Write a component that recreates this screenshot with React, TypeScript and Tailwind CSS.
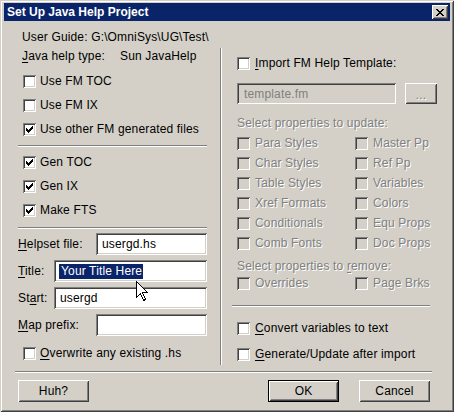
import React from "react";

const sunken =
  "shadow-[inset_1px_1px_#808080,inset_-1px_-1px_#ffffff,inset_2px_2px_#404040,inset_-2px_-2px_#d4d0c8]";
const raised =
  "shadow-[inset_1px_1px_#ffffff,inset_-1px_-1px_#404040,inset_2px_2px_#d4d0c8,inset_-2px_-2px_#808080]";
const dis = "text-[#808080] [text-shadow:1px_1px_0_#ffffff]";

function CheckMark() {
  return (
    <svg width="7" height="7" viewBox="0 0 7 7" shapeRendering="crispEdges" className="block">
      <path
        fill="#000"
        d="M0 2h1v3H0zM1 3h1v3H1zM2 4h1v3H2zM3 3h1v3H3zM4 2h1v3H4zM5 1h1v3H5zM6 0h1v3H6z"
      />
    </svg>
  );
}

function Box({ checked, disabled }: { checked?: boolean; disabled?: boolean }) {
  return (
    <span
      className={`w-[13px] h-[13px] shrink-0 flex items-center justify-center ${
        disabled ? "bg-[#d4d0c8]" : "bg-white"
      } ${sunken}`}
    >
      {checked && <CheckMark />}
    </span>
  );
}

function CheckRow({
  label,
  checked,
  disabled,
  h = "h-[24px]",
  gap = "gap-[4px]",
  w = "",
}: {
  label: React.ReactNode;
  checked?: boolean;
  disabled?: boolean;
  h?: string;
  gap?: string;
  w?: string;
}) {
  return (
    <div className={`flex items-center ${h} ${gap} ${w}`}>
      <Box checked={checked} disabled={disabled} />
      <span className={`whitespace-nowrap ${disabled ? dis : "text-black"}`}>{label}</span>
    </div>
  );
}

function U({ children }: { children: React.ReactNode }) {
  return <span className="underline underline-offset-[2px] decoration-1">{children}</span>;
}

function HSep({ className = "" }: { className?: string }) {
  return <div className={`h-[2px] border-t border-t-[#808080] border-b border-b-white ${className}`} />;
}

function Field({ w, children }: { w: string; children?: React.ReactNode }) {
  return (
    <div className={`${w} h-[22px] bg-white ${sunken} flex items-center pl-[6px] text-black whitespace-nowrap`}>
      {children}
    </div>
  );
}

function Button({ children, def, w = "w-[71px]" }: { children: React.ReactNode; def?: boolean; w?: string }) {
  if (def) {
    return (
      <div className={`${w} h-[22px] border border-black flex`}>
        <div className={`flex-1 flex items-center justify-center ${raised} text-black`}>{children}</div>
      </div>
    );
  }
  return <div className={`${w} h-[22px] flex items-center justify-center ${raised} text-black`}>{children}</div>;
}

function CloseGlyph() {
  return (
    <svg width="8" height="7" viewBox="0 0 8 7" shapeRendering="crispEdges" className="block">
      <path
        fill="#000"
        d="M0 0h2v1H0zM6 0h2v1H6zM1 1h2v1H1zM5 1h2v1H5zM2 2h4v1H2zM3 3h2v1H3zM2 4h4v1H2zM1 5h2v1H1zM5 5h2v1H5zM0 6h2v1H0zM6 6h2v1H6z"
      />
    </svg>
  );
}

function Cursor() {
  return (
    <svg width="13" height="21" viewBox="0 0 13 21" shapeRendering="crispEdges" className="block">
      <path
        d="M0.5 0.5 L0.5 16.5 L4.5 12.5 L7.5 19.5 L9.5 18.5 L6.5 11.5 L11.5 11.5 Z"
        fill="#fff"
        stroke="#000"
        strokeWidth="1"
      />
    </svg>
  );
}

export default function App() {
  return (
    <div
      className={`relative w-[454px] h-[412px] bg-[#d4d0c8] pt-[3px] px-[4px] flex flex-col font-['Liberation_Sans',Arial,sans-serif] text-[12px] leading-[14px] tracking-[0.15px] shadow-[inset_1px_1px_#d4d0c8,inset_-1px_-1px_#404040,inset_2px_2px_#ffffff,inset_-2px_-2px_#808080]`}
    >
      {/* title bar */}
      <div className="h-[18px] shrink-0 bg-[#0a246a] flex items-center justify-between pl-[3px] pr-[2px]">
        <span className="text-white font-bold text-[12px] tracking-normal whitespace-nowrap">Set Up Java Help Project</span>
        <div className={`w-[16px] h-[14px] bg-[#d4d0c8] ${raised} flex items-center justify-center`}>
          <CloseGlyph />
        </div>
      </div>

      {/* user guide */}
      <div className="mt-[9px] pl-[18px] h-[14px] text-black whitespace-nowrap">User Guide: G:\OmniSys\UG\Test\</div>

      {/* columns */}
      <div className="mt-[4px] h-[317px] flex">
        {/* left column */}
        <div className="w-[216px] shrink-0 pl-[14px] flex flex-col">
          <div className="h-[16px] flex items-center pl-[4px] text-black whitespace-nowrap">
            <span className="w-[98px]">
              <U>J</U>ava help type:
            </span>
            <span>Sun JavaHelp</span>
          </div>
          <div className="mt-[6px] pl-[5px] flex flex-col">
            <CheckRow label="Use FM TOC" />
            <CheckRow label="Use FM IX" />
            <CheckRow label="Use other FM generated files" checked />
          </div>
          <HSep className="mt-[4px] w-[189px]" />
          <div className="mt-[3px] pl-[5px] flex flex-col">
            <CheckRow label="Gen TOC" checked />
            <CheckRow label="Gen IX" checked />
            <CheckRow label="Make FTS" checked />
          </div>
          <HSep className="mt-[5px] w-[189px]" />
          <div className="mt-[4px] w-[189px] flex flex-col gap-[5px]">
            <div className="flex items-center justify-between">
              <span className="text-black">
                <U>H</U>elpset file:
              </span>
              <Field w="w-[111px]">usergd.hs</Field>
            </div>
            <div className="flex items-center justify-between">
              <span className="text-black">
                <U>T</U>itle:
              </span>
              <div className={`w-[153px] h-[22px] bg-white ${sunken} flex items-center pl-[5px]`}>
                <span className="bg-[#0a246a] text-white pl-[2px] pr-[1px] leading-[15px]">Your Title Here</span>
              </div>
            </div>
            <div className="flex items-center justify-between">
              <span className="text-black">
                St<U>a</U>rt:
              </span>
              <Field w="w-[153px]">usergd</Field>
            </div>
            <div className="flex items-center justify-between">
              <span className="text-black">
                <U>M</U>ap prefix:
              </span>
              <Field w="w-[111px]" />
            </div>
          </div>
          <div className="mt-[5px] pl-[5px]">
            <CheckRow
              label={
                <>
                  <U>O</U>verwrite any existing .hs
                </>
              }
            />
          </div>
        </div>

        {/* vertical separator */}
        <div className="w-[2px] h-full border-l border-l-[#808080] border-r border-r-white shrink-0" />

        {/* right column */}
        <div className="flex-1 pl-[15px] flex flex-col">
          <div className="mt-[3px]">
            <CheckRow
              gap="gap-[5px]"
              label={
                <>
                  <U>I</U>mport FM Help Template:
                </>
              }
            />
          </div>
          <div className="mt-[8px] flex items-center gap-[9px]">
            <div className={`w-[159px] h-[21px] ${sunken} flex items-center pl-[7px] text-[#808080]`}>
              template.fm
            </div>
            <div className={`w-[32px] h-[21px] ${raised} flex items-center justify-center ${dis}`}>
              <span className="mt-[3px] leading-[10px]">...</span>
            </div>
          </div>
          <div className={`mt-[12px] h-[14px] whitespace-nowrap ${dis}`}>Select properties to update:</div>
          <div className="mt-[3px] grid grid-cols-[118px_1fr]">
            <CheckRow disabled h="h-[20px]" gap="gap-[5px]" label="Para Styles" />
            <CheckRow disabled h="h-[20px]" gap="gap-[5px]" label="Master Pp" />
            <CheckRow disabled h="h-[20px]" gap="gap-[5px]" label="Char Styles" />
            <CheckRow disabled h="h-[20px]" gap="gap-[5px]" label="Ref Pp" />
            <CheckRow disabled h="h-[20px]" gap="gap-[5px]" label="Table Styles" />
            <CheckRow disabled h="h-[20px]" gap="gap-[5px]" label="Variables" />
            <CheckRow disabled h="h-[20px]" gap="gap-[5px]" label="Xref Formats" />
            <CheckRow disabled h="h-[20px]" gap="gap-[5px]" label="Colors" />
            <CheckRow disabled h="h-[20px]" gap="gap-[5px]" label="Conditionals" />
            <CheckRow disabled h="h-[20px]" gap="gap-[5px]" label="Equ Props" />
            <CheckRow disabled h="h-[20px]" gap="gap-[5px]" label="Comb Fonts" />
            <CheckRow disabled h="h-[20px]" gap="gap-[5px]" label="Doc Props" />
          </div>
          <div className={`mt-[6px] h-[14px] whitespace-nowrap ${dis}`}>
            Select properties to <span className="underline underline-offset-[2px]">r</span>emove:
          </div>
          <div className="grid grid-cols-[118px_1fr]">
            <CheckRow disabled h="h-[20px]" gap="gap-[5px]" label="Overrides" />
            <CheckRow disabled h="h-[20px]" gap="gap-[5px]" label="Page Brks" />
          </div>
          <HSep className="mt-[12px] ml-[-5px] w-[198px]" />
          <div className="mt-[8px] flex flex-col">
            <CheckRow
              h="h-[26px]"
              gap="gap-[5px]"
              label={
                <>
                  <U>C</U>onvert variables to text
                </>
              }
            />
            <CheckRow
              h="h-[26px]"
              gap="gap-[5px]"
              label={
                <>
                  <U>G</U>enerate/Update after import
                </>
              }
            />
          </div>
        </div>
      </div>

      {/* bottom separator */}
      <HSep className="mt-[6px] ml-[11px] w-[417px]" />

      {/* buttons */}
      <div className="mt-[7px] flex items-center pl-[14px]">
        <Button>Huh?</Button>
        <div className="ml-[179px] flex gap-[20px]">
          <Button def>OK</Button>
          <Button>Cancel</Button>
        </div>
      </div>

      {/* mouse cursor */}
      <div className="absolute left-[136px] top-[281px]">
        <Cursor />
      </div>
    </div>
  );
}
